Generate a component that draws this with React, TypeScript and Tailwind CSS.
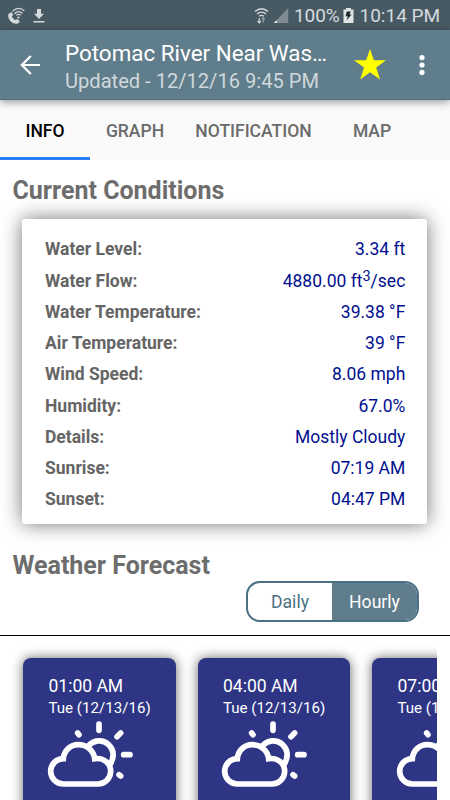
import React from "react";

const conditions: { label: string; value: React.ReactNode }[] = [
  { label: "Water Level:", value: "3.34 ft" },
  {
    label: "Water Flow:",
    value: (
      <>
        4880.00 ft<sup className="relative top-[-6px] align-baseline text-[14.5px] leading-none">3</sup>/sec
      </>
    ),
  },
  { label: "Water Temperature:", value: "39.38 °F" },
  { label: "Air Temperature:", value: "39 °F" },
  { label: "Wind Speed:", value: "8.06 mph" },
  { label: "Humidity:", value: "67.0%" },
  { label: "Details:", value: "Mostly Cloudy" },
  { label: "Sunrise:", value: "07:19 AM" },
  { label: "Sunset:", value: "04:47 PM" },
];

const hours = ["01:00 AM", "04:00 AM", "07:00 AM"];

function PartlyCloudy() {
  return (
    <svg
      className="-ml-[1.5px] block h-[69px] w-[88px]"
      viewBox="141 237 264 207"
      fill="none"
      stroke="#fff"
      strokeWidth="17"
      strokeLinecap="round"
    >
      <path
        strokeLinecap="butt"
        strokeLinejoin="miter"
        d="M190 432 A38 38 0 0 1 190 356 C192 332 211 314 235 314 C260 314 281 331 284 356 C312 352 332 371 332 394 A38 38 0 0 1 294 432 Z"
      />
      <path strokeLinecap="butt" d="M265 318 C282 300 307 297 325 313 C342 329 343 351 331 373" />
      <path d="M297 252 V271 M351 290 L362 279 M371 344 H390 M357 404 L362 408 M233 279 L237 284" />
    </svg>
  );
}

function StatusBar() {
  return (
    <div className="flex h-[30px] shrink-0 items-center bg-[#475a64] pt-[1px] text-[#d5dadd]">
      <svg className="ml-[7px] h-[18px] w-[18px]" viewBox="0 0 18 18" fill="none" stroke="currentColor">
        <path
          fill="currentColor"
          stroke="none"
          d="M3.5 5.5 L1.3 7.3 C.2 12.5 5.5 17.8 10.8 16.6 L13 14.6 L10.2 11.9 L8.2 13.1 C6.9 12.3 5.5 10.7 4.8 9.2 L6.2 7.9 L4.6 5.3Z"
        />
        <path strokeWidth="1.3" d="M5.4 4.4 Q11.5 -1.4 17.3 3.8 M7.4 6.7 Q11.7 2.6 15.5 6.4" />
        <path strokeWidth="1.2" d="M9.3 8.4 Q11.5 6.4 13.8 8.3" />
        <circle cx="11.5" cy="10.6" r="1.1" fill="currentColor" stroke="none" />
      </svg>
      <svg className="ml-[8px] h-[14px] w-[12px]" viewBox="0 0 12 14" fill="currentColor">
        <path d="M4 0h4v4.7h3L6 10 1 4.7h3zM.5 12h11v1.6H.5z" />
      </svg>
      <svg className="ml-[209px] h-[17px] w-[15px]" viewBox="0 0 15 17" fill="none" stroke="currentColor">
        <path strokeWidth="1.4" d="M1 4.5 Q7.5 -1.2 14 4.5 M3 7 Q7.5 3.3 12 7 M5.2 9.2 Q7.5 7.5 9.8 9.2" />
        <path strokeWidth="1.2" d="M5.2 11v4.5M3.6 14l1.6 2 1.6-2" />
        <path strokeWidth="1.2" className="opacity-50" d="M9.2 16v-5M7.7 12.5l1.5-1.8 1.6 1.8" />
      </svg>
      <svg className="ml-[4px] h-[15px] w-[16px]" viewBox="0 0 16 15">
        <path d="M15.2 0V15H1Z" fill="#7f8c93" />
        <path d="M4 12V15H.5Z" fill="#d5dadd" />
      </svg>
      <span className="ml-[5px] w-[47px] text-[19px] leading-[28px] tracking-[-0.1px] whitespace-nowrap">100%</span>
      <svg className="ml-[2px] h-[15px] w-[11px]" viewBox="0 0 11 15">
        <path d="M3 0h5v1.5h2.5V15H.5V1.5H3z" fill="#e0e4e6" />
        <path d="M3.8 3.5h4L6.5 6.6h2.2L3.5 12.3l1.3-4.1H2.6z" fill="#1e282d" />
      </svg>
      <span className="ml-[5.5px] text-[19px] leading-[28px] whitespace-nowrap">10:14 PM</span>
    </div>
  );
}

export default function App() {
  return (
    <div className="flex h-[800px] w-[450px] flex-col overflow-hidden bg-white font-[Roboto,sans-serif]">
      <StatusBar />
      <header className="relative z-10 flex h-[70px] shrink-0 items-center border-b border-[#4b7183] bg-[#607d8b] shadow-[0_2px_8px_rgba(0,0,0,0.4)]">
        <svg className="ml-[20px] h-[20px] w-[20px]" viewBox="0 0 20 20" fill="none" stroke="#fff" strokeWidth="2.2">
          <path d="M20 10H2M10.8 1L1.8 10l9 9" />
        </svg>
        <div className="ml-[25px] w-[272px] pt-[5px] whitespace-nowrap">
          <div className="text-[22.4px] leading-[28px] text-white">Potomac River Near Was…</div>
          <div className="text-[20.1px] leading-[28px] text-[#cfd8dc]">Updated - 12/12/16 9:45 PM</div>
        </div>
        <svg className="ml-[17px] h-[31px] w-[32px]" viewBox="0 0 32 31" fill="#ff0">
          <path d="M16 0l3.9 11.2H32l-9.8 7.2L26 30.5l-10-7.2-9.8 7.2 3.8-12.1L0 11.2h12.1z" />
        </svg>
        <svg className="ml-[33px] h-[20px] w-[6px]" viewBox="0 0 6 20" fill="#fff">
          <circle cx="3" cy="2.6" r="2.6" />
          <circle cx="3" cy="10" r="2.6" />
          <circle cx="3" cy="17.4" r="2.6" />
        </svg>
      </header>

      <nav className="flex h-[60px] shrink-0 bg-[#fafafa] text-center text-[17.5px] leading-[62px] font-medium whitespace-nowrap text-[#6b6b6b]">
        <div className="w-[90px] border-b-[3px] border-[#2b7cf7] text-black">INFO</div>
        <div className="w-[90px]">GRAPH</div>
        <div className="w-[147px]">NOTIFICATION</div>
        <div className="w-[90px]">MAP</div>
      </nav>

      <main className="flex flex-1 flex-col">
        <h1 className="mt-[15px] ml-[12.5px] text-[25px] leading-[32px] font-bold text-[#6d6d6d]">Current Conditions</h1>
        <section className="mt-[12px] ml-[22px] flex h-[305px] w-[405px] shrink-0 flex-col rounded-[3px] bg-white pt-[15.4px] pr-[21.7px] pl-[23px] shadow-[0_0_20px_rgba(0,0,0,0.55)]">
          {conditions.map((c) => (
            <div key={c.label} className="flex h-[31.25px] shrink-0 items-center justify-between text-[17.5px] leading-none whitespace-nowrap">
              <span className="font-bold text-[#656565]">{c.label}</span>
              <span className="text-[#000f8f]">{c.value}</span>
            </div>
          ))}
        </section>

        <h2 className="mt-[26px] ml-[12.5px] text-[25px] leading-[31px] font-bold text-[#6d6d6d]">Weather Forecast</h2>
        <div className="ml-[246px] flex h-[41px] w-[173px] shrink-0 overflow-hidden rounded-[14px] border-2 border-[#4a7183] bg-white text-center text-[17.6px] leading-[39px]">
          <div className="w-[84px] text-[#4a7183]">Daily</div>
          <div className="flex-1 bg-[#607d8b] text-white">Hourly</div>
        </div>

        <div className="mt-[13px] h-[1px] shrink-0 bg-black" />
        <div className="h-[164px] w-[437px] shrink-0 overflow-hidden">
          <div className="mt-[22px] ml-[23.3px] flex w-[520px] gap-[22px]">
            {hours.map((time) => (
              <div
                key={time}
                className="h-[200px] w-[152.5px] shrink-0 rounded-[8px] bg-[#2e3585] pt-[17px] pl-[25.2px] whitespace-nowrap text-white shadow-[0_0_12px_rgba(0,0,0,0.6)]"
              >
                <div className="text-[17.5px] leading-[22px]">{time}</div>
                <div className="text-[15.1px] leading-[22px]">Tue (12/13/16)</div>
                <PartlyCloudy />
              </div>
            ))}
          </div>
        </div>
      </main>
    </div>
  );
}
